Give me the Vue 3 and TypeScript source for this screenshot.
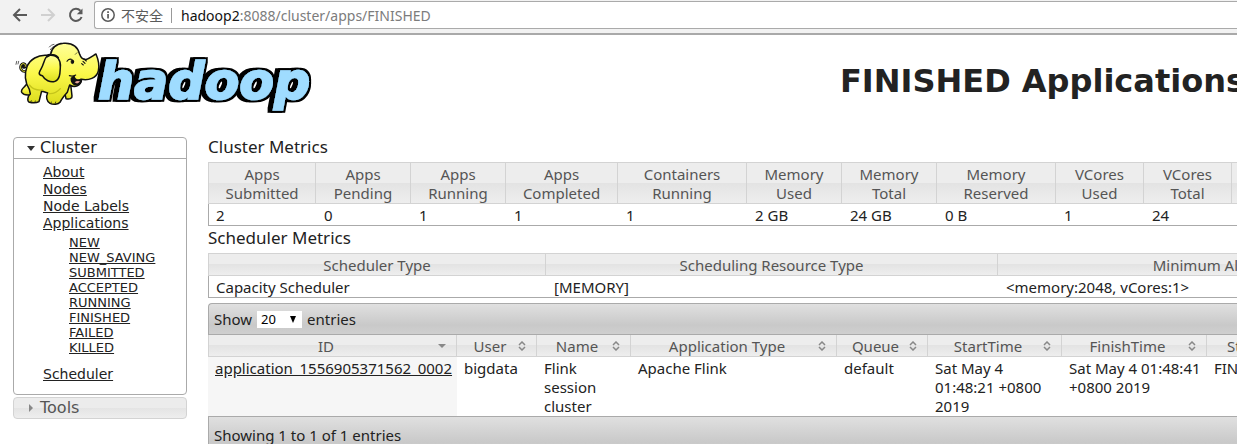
<script setup lang="ts">
import { ref } from 'vue'

interface Column {
  width: number
  label: string
  value: string
}

const pageSize = ref('20')

const mainLinks: string[] = ['About', 'Nodes', 'Node Labels', 'Applications']
const stateLinks: string[] = ['NEW', 'NEW_SAVING', 'SUBMITTED', 'ACCEPTED', 'RUNNING', 'FINISHED', 'FAILED', 'KILLED']

const clusterColumns: Column[] = [
  { width: 108, label: 'Apps Submitted', value: '2' },
  { width: 95, label: 'Apps Pending', value: '0' },
  { width: 95, label: 'Apps Running', value: '1' },
  { width: 112, label: 'Apps Completed', value: '1' },
  { width: 129, label: 'Containers Running', value: '1' },
  { width: 95, label: 'Memory Used', value: '2 GB' },
  { width: 95, label: 'Memory Total', value: '24 GB' },
  { width: 119, label: 'Memory Reserved', value: '0 B' },
  { width: 88, label: 'VCores Used', value: '1' },
  { width: 88, label: 'VCores Total', value: '24' },
  { width: 119, label: '', value: '' },
]

const schedulerColumns: Column[] = [
  { width: 338, label: 'Scheduler Type', value: 'Capacity Scheduler' },
  { width: 452, label: 'Scheduling Resource Type', value: '[MEMORY]' },
  { width: 452, label: 'Minimum Allocation', value: '<memory:2048, vCores:1>' },
]

const appColumns: Column[] = [
  { width: 249, label: 'ID', value: 'application_1556905371562_0002' },
  { width: 80, label: 'User', value: 'bigdata' },
  { width: 94, label: 'Name', value: 'Flink session cluster' },
  { width: 206, label: 'Application Type', value: 'Apache Flink' },
  { width: 91, label: 'Queue', value: 'default' },
  { width: 134, label: 'StartTime', value: 'Sat May 4 01:48:21 +0800 2019' },
  { width: 145, label: 'FinishTime', value: 'Sat May 4 01:48:41 +0800 2019' },
  { width: 90, label: 'State', value: 'FINISHED' },
]

const total = (columns: Column[]): string => columns.reduce((sum, c) => sum + c.width, 0) + 'px'
</script>

<template>
  <div class="window">
    <div class="toolbar">
      <button class="nav" aria-label="Back">
        <svg width="16" height="16" viewBox="0 0 16 16"><path d="M15 8H2.5M8 2L2 8l6 6" fill="none" stroke="#5a5a5a" stroke-width="2" /></svg>
      </button>
      <button class="nav" aria-label="Forward" disabled>
        <svg width="16" height="16" viewBox="0 0 16 16"><path d="M1 8h12.5M8 2l6 6-6 6" fill="none" stroke="#d0d0d0" stroke-width="2" /></svg>
      </button>
      <button class="nav" aria-label="Reload">
        <svg width="16" height="16" viewBox="0 0 16 16">
          <path d="M13.6 10A6 6 0 1 1 12.4 3.8" fill="none" stroke="#5a5a5a" stroke-width="2" />
          <path d="M14.5 1.5v5.8H8.8z" fill="#5a5a5a" />
        </svg>
      </button>
      <div class="address">
        <svg width="14" height="14" viewBox="0 0 14 14">
          <circle cx="7" cy="7" r="6.2" fill="none" stroke="#5a5a5a" stroke-width="1.5" />
          <path d="M6.2 6h1.7v4.5H6.2zM6.2 3.3h1.7V5H6.2z" fill="#5a5a5a" />
        </svg>
        <span class="insecure">不安全</span>
        <div class="url" role="textbox" aria-label="Address" contenteditable="true" spellcheck="false"><span class="host">hadoop2</span>:8088/cluster/apps/FINISHED</div>
      </div>
    </div>

    <header class="banner">
      <svg class="logo" viewBox="0 0 930 240" role="img" aria-label="hadoop logo">
        <defs>
          <linearGradient id="hide" x1="0" y1="0" x2="0" y2="1">
            <stop offset="0" stop-color="#ffff9a" />
            <stop offset="0.5" stop-color="#fbf84a" />
            <stop offset="1" stop-color="#dcdc1c" />
          </linearGradient>
          <filter id="block" x="-5%" y="-10%" width="110%" height="120%">
            <feMorphology in="SourceAlpha" operator="dilate" radius="6" result="edge" />
            <feOffset in="SourceAlpha" dx="-9" dy="0" result="shifted" />
            <feMorphology in="shifted" operator="dilate" radius="6" result="depth" />
            <feMerge>
              <feMergeNode in="depth" />
              <feMergeNode in="edge" />
              <feMergeNode in="SourceGraphic" />
            </feMerge>
          </filter>
        </defs>
        <text class="word" x="264" y="188" filter="url(#block)">hadoop</text>
        <g stroke="#111" stroke-width="4.5" stroke-linejoin="round" stroke-linecap="round" fill="url(#hide)">
          <path d="M49 105C36 110 29 98 33 88C37 79 49 83 46 91C44 97 38 94 40 90" fill="none" stroke-width="8" />
          <path d="M49 105C36 110 29 98 33 88C37 79 49 83 46 91" fill="none" stroke="#f0ed38" stroke-width="3" />
          <path d="M50 145C42 155 31 160 35 169C42 179 52 178 62 176L72 155z" />
          <path d="M160 150L168 188C178 190 187 188 186 180L182 145z" />
          <path d="M110 58C84 56 60 70 51 92C43 112 44 139 58 160L61 174C52 181 51 196 58 199C68 201 80 201 87 197L95 165L113 171C107 182 110 197 120 202C130 207 145 205 150 199C155 189 163 179 172 169L179 147C195 157 212 150 214 130C235 134 260 127 265 105C270 86 263 66 258 54C252 57 242 65 230 70C219 72 212 64 209 55C203 30 184 20 160 22C139 23 124 36 122 55z" />
          <path d="M184 127C183 142 195 150 206 145C216 140 215 132 212 130C202 134 194 131 192 121z" fill="#111" />
          <path d="M194 139Q200 133 210 136Q203 147 194 139" fill="#e9a39a" stroke="none" />
          <path d="M121 58C103 57 104 80 94 97C88 107 82 117 97 119C104 132 121 141 135 136C151 130 150 109 151 93C153 74 143 57 121 58z" />
          <path d="M112 62C121 54 137 53 145 65" fill="none" />
          <path d="M178 119C185 121 191 121 197 117M171 76Q176 67 184 70M190 75L190 80M222 69L229 75M219 76L225 82M215 83L220 87" fill="none" stroke-width="3.5" />
          <ellipse cx="187" cy="77" rx="4" ry="6" fill="#111" stroke-width="2" />
          <path d="M196 55L201 50M118 33C122 28 127 26 132 25M121 41C125 34 131 31 137 30M18 85L20 76M24 84L26 76M62 198L64 194M74 200L76 195M123 202L124 198M136 202L137 198" fill="none" stroke-width="2" />
          <path d="M58 147Q72 165 98 162M118 173Q137 174 151 158" fill="none" stroke="#c6c51b" stroke-width="4" />
        </g>
      </svg>
      <h1>FINISHED Applications</h1>
    </header>

    <div class="content">
      <nav class="side">
        <section class="open">
          <h3><button><svg width="8" height="5" viewBox="0 0 8 5"><path d="M0 0h8L4 5z" fill="#333" /></svg>Cluster</button></h3>
          <div class="links">
            <a v-for="link in mainLinks" :key="link" href="#">{{ link }}</a>
            <div class="states">
              <a v-for="link in stateLinks" :key="link" href="#">{{ link }}</a>
            </div>
            <a href="#">Scheduler</a>
          </div>
        </section>
        <h3 class="closed"><button><svg width="8" height="8" viewBox="0 0 8 8"><path d="M2 0v8l4-4z" fill="#888" /></svg>Tools</button></h3>
      </nav>

      <main>
        <h2>Cluster Metrics</h2>
        <table class="metrics cluster" :style="{ width: total(clusterColumns) }">
          <colgroup><col v-for="(c, i) in clusterColumns" :key="i" :style="{ width: c.width + 'px' }" /></colgroup>
          <thead><tr><th v-for="(c, i) in clusterColumns" :key="i"><span>{{ c.label }}</span></th></tr></thead>
          <tbody><tr><td v-for="(c, i) in clusterColumns" :key="i">{{ c.value }}</td></tr></tbody>
        </table>

        <h2>Scheduler Metrics</h2>
        <table class="metrics" :style="{ width: total(schedulerColumns) }">
          <colgroup><col v-for="c in schedulerColumns" :key="c.label" :style="{ width: c.width + 'px' }" /></colgroup>
          <thead><tr><th v-for="c in schedulerColumns" :key="c.label">{{ c.label }}</th></tr></thead>
          <tbody><tr><td v-for="c in schedulerColumns" :key="c.label">{{ c.value }}</td></tr></tbody>
        </table>

        <div class="bar top">
          <label for="size">Show</label>
          <span class="picker">
            <select id="size" v-model="pageSize"><option>20</option></select>
            <svg width="6" height="7" viewBox="0 0 6 7"><path d="M0 0h6L3 7z" fill="#000" /></svg>
          </span>
          <span>entries</span>
        </div>
        <table class="apps" :style="{ width: total(appColumns) }">
          <colgroup><col v-for="c in appColumns" :key="c.label" :style="{ width: c.width + 'px' }" /></colgroup>
          <thead>
            <tr>
              <th v-for="(c, i) in appColumns" :key="c.label">
                <div class="sort">
                  <span>{{ c.label }}</span>
                  <svg v-if="i === 0" width="8" height="10" viewBox="0 0 8 10"><path d="M0 3h8L4 7z" fill="#888" /></svg>
                  <svg v-else width="8" height="10" viewBox="0 0 8 10"><path d="M1 4l3-3 3 3M1 6l3 3 3-3" fill="none" stroke="#888" stroke-width="1.5" /></svg>
                </div>
              </th>
            </tr>
          </thead>
          <tbody>
            <tr>
              <td v-for="(c, i) in appColumns" :key="c.label">
                <a v-if="i === 0" href="#">{{ c.value }}</a>
                <template v-else>{{ c.value }}</template>
              </td>
            </tr>
          </tbody>
        </table>
        <div class="bar bottom">Showing 1 to 1 of 1 entries</div>
      </main>
    </div>
  </div>
</template>

<style>
body {
  margin: 0;
  background: #fff;
}
</style>

<style scoped>
.window {
  height: 100vh;
  overflow: hidden;
  font: 15px/19px 'Noto Sans', 'Noto Sans CJK SC', sans-serif;
  color: #222;
}
.window * {
  box-sizing: border-box;
}
button {
  padding: 0;
  border: 0;
  background: none;
  font: inherit;
  color: inherit;
}
a {
  color: inherit;
}
.toolbar {
  display: flex;
  gap: 12px;
  height: 35px;
  padding: 1px 0 5px 12px;
  background: #f2f2f2;
  border-bottom: 2px solid #a9a9a9;
}
.nav {
  display: flex;
  align-items: center;
  width: 16px;
  height: 28px;
}
.nav svg {
  flex: none;
}
.address {
  flex: 1;
  display: flex;
  align-items: center;
  height: 28px;
  margin-left: -2px;
  padding-left: 6px;
  background: #fff;
  border: 1px solid #aaa;
  border-right: 0;
  border-radius: 3px 0 0 3px;
}
.insecure {
  margin-left: 6px;
  padding-right: 8px;
  border-right: 1px solid #999;
  font: 14px/15px 'Noto Sans CJK SC', sans-serif;
  color: #5a5a5a;
}
.url {
  padding-left: 9px;
  font-size: 14px;
  color: #7c7c7c;
  white-space: nowrap;
}
.host {
  color: #111;
}
.banner {
  display: flex;
  height: 99px;
  padding-left: 10px;
}
.logo {
  flex: none;
  width: 310px;
  height: 80px;
  margin-top: 1px;
}
.word {
  font: italic bold 152px 'DejaVu Sans', sans-serif;
  fill: #9fdcff;
  stroke: #9fdcff;
  stroke-width: 5px;
}
h1 {
  margin: 26px 0 0 520px;
  font: bold 32px/40px 'DejaVu Sans', sans-serif;
  white-space: nowrap;
}
.content {
  display: flex;
  padding-left: 13px;
}
.side {
  flex: none;
  width: 174px;
  margin-top: 3px;
  font: 14px/17px 'DejaVu Sans', sans-serif;
}
h3 {
  margin: 0;
  font: 16px/20px 'DejaVu Sans', sans-serif;
}
h3 button {
  display: flex;
  align-items: center;
  gap: 5px;
  width: 100%;
  padding-left: 13px;
}
.open {
  border: 1px solid #aaa;
  border-radius: 4px;
}
.open h3 {
  border-bottom: 1px solid #aaa;
}
.links {
  display: flex;
  flex-direction: column;
  align-items: flex-start;
  padding: 5px 0 11px 29px;
}
.states {
  display: flex;
  flex-direction: column;
  align-items: flex-start;
  padding: 3px 0 11px 26px;
  font-size: 13px;
  line-height: 15px;
}
.closed {
  margin-top: 2px;
  border: 1px solid #d3d3d3;
  border-radius: 4px;
  background: linear-gradient(#ececec 50%, #e4e4e4 50%, #eee);
  color: #555;
}
main {
  flex: 1;
  min-width: 0;
  margin-left: 21px;
  overflow: hidden;
}
h2 {
  margin: 0;
  font-size: 17px;
  font-weight: 400;
  line-height: 24px;
  padding-bottom: 3px;
}
h2:first-child {
  padding: 1px 0 3px;
}
table {
  table-layout: fixed;
  border-collapse: separate;
  border-spacing: 0;
}
th {
  padding: 2px 8px 0;
  border-right: 1px solid #d3d3d3;
  border-bottom: 1px solid #d3d3d3;
  background: linear-gradient(#ededed 50%, #e3e3e3 50%, #eee);
  font-weight: 400;
  color: #555;
}
.metrics th {
  border-top: 1px solid #d3d3d3;
}
.metrics th:first-child {
  border-left: 1px solid #d3d3d3;
}
.cluster th {
  height: 42px;
}
.cluster th span {
  display: block;
  width: min-content;
  margin: 0 auto;
}
td {
  padding: 2px 8px 0;
  vertical-align: top;
}
.metrics td {
  border-bottom: 1px solid #aaa;
}
.metrics td:first-child {
  padding-left: 7px;
  border-left: 1px solid #aaa;
}
.bar {
  display: flex;
  align-items: center;
  padding-left: 5px;
  border: 1px solid #aaa;
  border-right: 0;
  background: linear-gradient(#e0e0e0, #c9c9c9 70%, #cfcfcf);
}
.top {
  gap: 5px;
  height: 32px;
  margin-top: 5px;
  border-top-left-radius: 4px;
}
.bottom {
  height: 38px;
}
.picker {
  position: relative;
  display: flex;
}
.picker svg {
  position: absolute;
  right: 6px;
  top: 5px;
  pointer-events: none;
}
select {
  appearance: none;
  width: 45px;
  height: 17px;
  padding: 0 4px;
  border: 0;
  border-radius: 0;
  background: #fff;
  font: 13px/17px 'Noto Sans', sans-serif;
  color: #000;
}
.apps th:first-child {
  border-left: 1px solid #d3d3d3;
}
.sort {
  display: flex;
  align-items: center;
}
.sort span {
  flex: 1;
  padding-right: 3px;
}
.sort svg {
  flex: none;
  margin: 0 2px 2px 0;
}
.apps td {
  height: 59px;
  padding: 2px 2px 0 7px;
}
.apps td:first-child {
  background: #f6f6f6;
}
</style>
